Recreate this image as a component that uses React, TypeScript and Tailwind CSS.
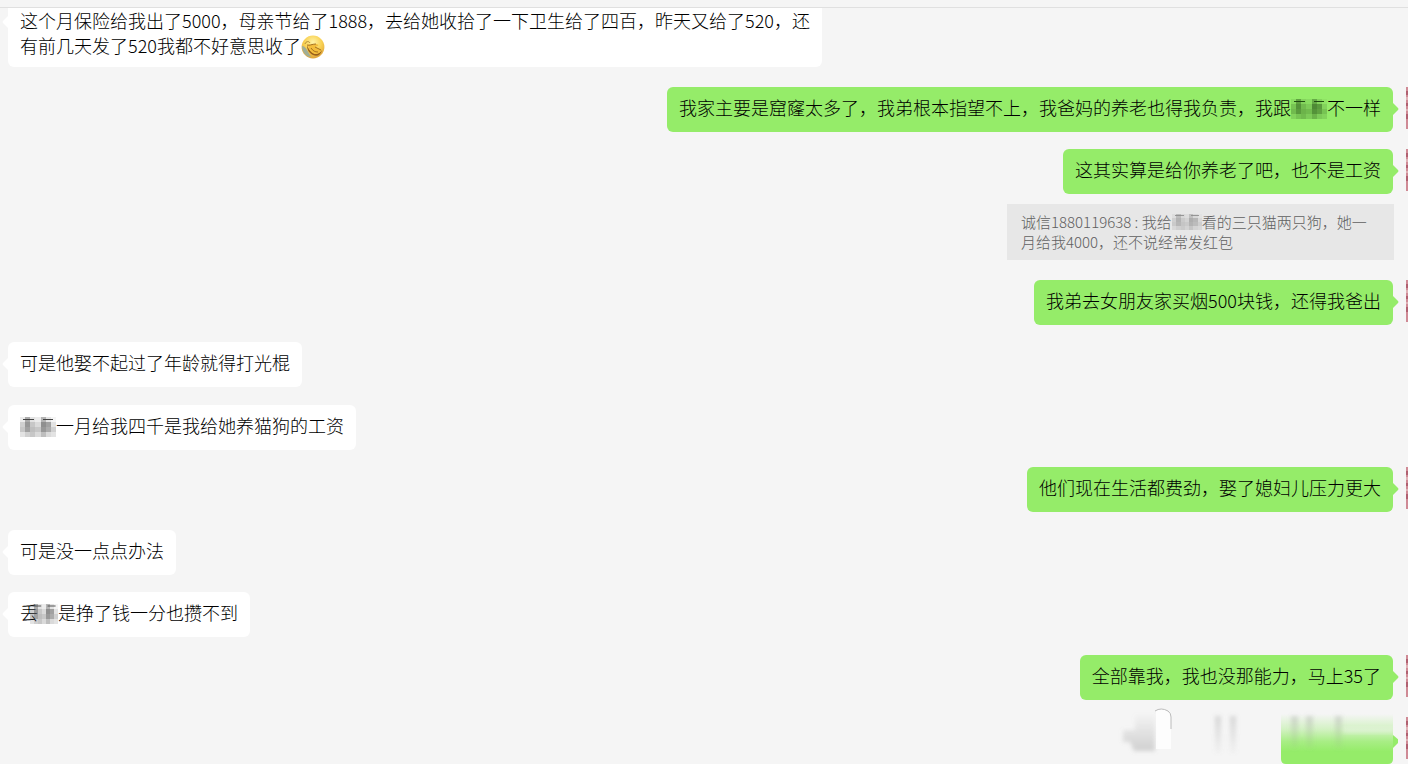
import type { ReactNode } from "react";

type Item = {
  side: "left" | "right";
  body: ReactNode;
  quote?: ReactNode;
};

const cells = [
  0.1, 0.45, 0.15, 0.1, 0.4, 0.15, 0.05,
  0.25, 0.55, 0.3, 0.2, 0.6, 0.5, 0.15,
  0.3, 0.5, 0.35, 0.3, 0.55, 0.45, 0.25,
  0.15, 0.25, 0.3, 0.2, 0.35, 0.2, 0.15,
];

const mosaicSize = {
  wide: "inline-block h-5 w-9 align-[-4px]",
  narrow: "inline-block h-5 w-7 -ml-2 align-[-4px]",
  small: "inline-block h-4 w-[30px] align-[-2px]",
};

// pixelated cover for a name
function Mosaic({ size = "wide", color = "#444" }: { size?: keyof typeof mosaicSize; color?: string }) {
  return (
    <svg viewBox="0 0 35 20" preserveAspectRatio="none" shapeRendering="crispEdges" className={mosaicSize[size]}>
      {cells.map((o, i) => (
        <rect key={i} x={(i % 7) * 5} y={Math.floor(i / 7) * 5} width="5" height="5" fill={color} opacity={o} />
      ))}
      <path d="M3 2h11M22 2h10" stroke={color} strokeWidth="1" />
    </svg>
  );
}

function FacePalm() {
  return (
    <svg viewBox="0 0 24 24" className="inline-block size-6 align-[-6px]">
      <defs>
        <radialGradient id="skin" cx="50%" cy="30%" r="70%">
          <stop offset="0" stopColor="#fff3a6" />
          <stop offset="0.55" stopColor="#f8d052" />
          <stop offset="1" stopColor="#dda23a" />
        </radialGradient>
      </defs>
      <circle cx="12" cy="12" r="11.4" fill="url(#skin)" />
      <path d="M4 9c1-3 4-3 5-1" stroke="#b08a3a" strokeWidth="1" fill="none" />
      <path d="M1 11c2 0 4 2 5 4l4 7c-5 0-9-5-9-11z" fill="#9fae98" />
      <path d="M6 10c1 4 4 7 8 9 3 0 5-1 7-4-1 5-5 7-9 5-4-2-6-5-6-10z" fill="#9a611c" />
      <path d="M7 9c2 2 5 0 8 0 2 0 3 1 2 2l-3 1 6 3c0 2-3 4-6 4-4-1-7-5-7-10z" fill="#f3bd3c" />
      <path d="M6 10c2 1 5-1 9-1M14 12l6 3M10 13c2 3 4 4 7 4" stroke="#a5701f" strokeWidth="1" fill="none" />
    </svg>
  );
}

function Avatar() {
  return (
    <svg viewBox="0 0 2 42" className="h-[42px] w-0.5 shrink-0">
      <rect width="2" height="42" fill="#cf8a95" />
      <path d="M0 4h2v4H0zM0 16h2v3H0zM0 27h2v5H0z" fill="#b06070" />
      <path d="M0 10h2v3H0zM0 22h2v2H0z" fill="#dfb0b5" />
    </svg>
  );
}

function Tail({ side }: { side: "left" | "right" }) {
  return side === "left" ? (
    <svg viewBox="0 0 7 12" className="absolute top-4 right-full h-3 w-[7px]">
      <path d="M7 0 2 5Q1 6 2 7l5 5z" fill="#fff" />
    </svg>
  ) : (
    <svg viewBox="0 0 7 12" className="absolute top-4 left-full h-3 w-[7px]">
      <path d="M0 0 5 5Q6 6 5 7l-5 5z" fill="#95ec69" />
    </svg>
  );
}

const items: Item[] = [
  { side: "right", body: <>我家主要是窟窿太多了，我弟根本指望不上，我爸妈的养老也得我负责，我跟<Mosaic color="#1f4a12" />不一样</> },
  {
    side: "right",
    body: "这其实算是给你养老了吧，也不是工资",
    quote: <>诚信1880119638 : 我给<Mosaic size="small" color="#888" />看的三只猫两只狗，她一月给我4000，还不说经常发红包</>,
  },
  { side: "right", body: "我弟去女朋友家买烟500块钱，还得我爸出" },
  { side: "left", body: "可是他娶不起过了年龄就得打光棍" },
  { side: "left", body: <><Mosaic />一月给我四千是我给她养猫狗的工资</> },
  { side: "right", body: "他们现在生活都费劲，娶了媳妇儿压力更大" },
  { side: "left", body: "可是没一点点办法" },
  { side: "left", body: <>丢<Mosaic size="narrow" />是挣了钱一分也攒不到</> },
  { side: "right", body: "全部靠我，我也没那能力，马上35了" },
];

function Message({ side, body, quote }: Item) {
  if (side === "left") {
    return (
      <div className="flex odd:mb-[18px] even:mb-[17px]">
        <div className="relative rounded-md bg-white px-3 pt-2 pb-3">
          <Tail side="left" />
          {body}
        </div>
      </div>
    );
  }
  return (
    <div className={quote ? "mb-5" : "odd:mb-[18px] even:mb-[17px]"}>
      <div className="flex justify-end gap-[13px]">
        <div className="relative rounded-md bg-[#95ec69] px-3 pt-2 pb-3">
          {body}
          <Tail side="right" />
        </div>
        <Avatar />
      </div>
      {quote && (
        <div className="mt-[10px] mr-[14px] ml-auto w-fit max-w-[387px] bg-[#e7e7e7] px-[14px] py-2 text-[15px] leading-5 text-[#606060]">
          {quote}
        </div>
      )}
    </div>
  );
}

// last message, wiped out apart from its lower edge
function Erased() {
  return (
    <div className="flex justify-end gap-2">
      <svg viewBox="0 0 280 60" className="-mt-3 h-[60px] w-[280px] shrink-0">
        <defs>
          <linearGradient id="wipe" x1="0" y1="0" x2="0" y2="1">
            <stop offset="0" stopColor="#95ec69" stopOpacity="0" />
            <stop offset="0.3" stopColor="#95ec69" stopOpacity="0.35" />
            <stop offset="0.55" stopColor="#95ec69" stopOpacity="0.8" />
            <stop offset="0.75" stopColor="#95ec69" />
          </linearGradient>
          <linearGradient id="streak" x1="0" y1="0" x2="0" y2="1">
            <stop offset="0" stopColor="#888" stopOpacity="0.28" />
            <stop offset="1" stopColor="#888" stopOpacity="0.04" />
          </linearGradient>
          <linearGradient id="smudge" x1="0" y1="0" x2="0" y2="1">
            <stop offset="0" stopColor="#999" stopOpacity="0.03" />
            <stop offset="1" stopColor="#999" stopOpacity="0.4" />
          </linearGradient>
          <filter id="soft" x="-30%" y="-30%" width="160%" height="160%">
            <feGaussianBlur stdDeviation="2" />
          </filter>
        </defs>
        <path d="M5 25h12V10h20v36H16l-4-9H5z" fill="url(#smudge)" filter="url(#soft)" />
        <path d="M38 44V6q6-4 12 0 3 2 3 6v32z" fill="#fff" opacity="0.8" />
        <path d="M37 6q6-4 13 0 3 2 3 6v12" fill="none" stroke="#bbb" strokeWidth="1" />
        <path d="M97 11h6v37h-6zM112 11h6v37h-6z" fill="url(#streak)" filter="url(#soft)" />
        <path d="M163 9h112v45q0 5-5 5H168q-5 0-5-5z" fill="url(#wipe)" />
        <path d="M275 30l6 5q1 1 0 2l-6 6z" fill="#95ec69" />
        <path d="M173 11h7v33h-7zM188 11h7v33h-7zM217 11h7v33h-7z" fill="url(#streak)" filter="url(#soft)" />
        <path d="M225 23h52v5h-52z" fill="#f5f5f5" opacity="0.4" filter="url(#soft)" />
      </svg>
      <Avatar />
    </div>
  );
}

export default function App() {
  return (
    <main className="h-screen overflow-hidden bg-[#f5f5f5] font-['Noto_Sans_CJK_SC',sans-serif] text-lg leading-[25px] font-light text-black">
      <header className="h-2 border-b border-[#e0e0e0] bg-[#f5f5f5]" />
      <section className="pl-2">
        <div className="mb-5 flex">
          <div className="relative rounded-b-md bg-white px-3 pb-2">
            <svg viewBox="0 0 7 12" className="absolute top-2 right-full h-3 w-[7px]">
              <path d="M7 0 2 5Q1 6 2 7l5 5z" fill="#fff" />
            </svg>
            这个月保险给我出了5000，母亲节给了1888，去给她收拾了一下卫生给了四百，昨天又给了520，还
            <br />
            有前几天发了520我都不好意思收了
            <FacePalm />
          </div>
        </div>
        {items.map((item, i) => (
          <Message key={i} {...item} />
        ))}
        <Erased />
      </section>
    </main>
  );
}
